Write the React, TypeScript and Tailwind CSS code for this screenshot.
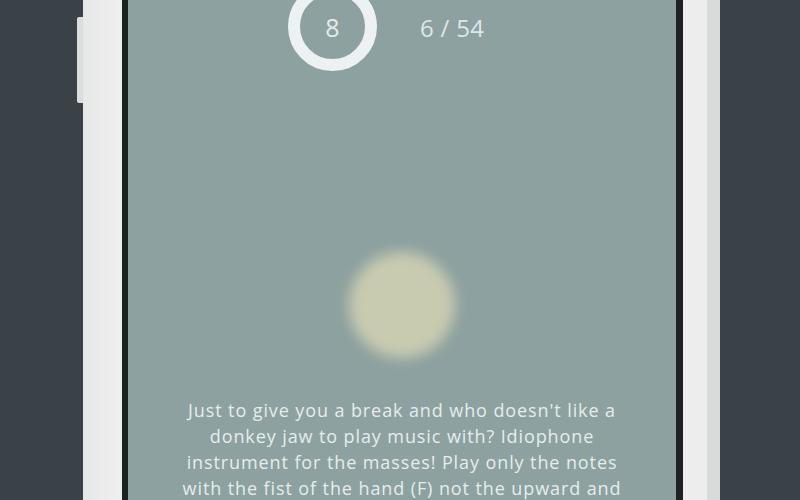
import React from 'react';

const lines = [
  "Just to give you a break and who doesn't like a",
  'donkey jaw to play music with? Idiophone',
  'instrument for the masses! Play only the notes',
  'with the fist of the hand (F) not the upward and',
];

const App = () => {
  return (
    <div className="w-[800px] h-[500px] bg-[#3a4248] overflow-hidden flex" style={{ fontFamily: '"Open Sans", sans-serif' }}>
      {/* side button */}
      <div className="w-[77px] shrink-0" />
      <div className="w-[6px] shrink-0 flex flex-col">
        <div className="h-[17px]" />
        <div className="h-[86px] bg-[#dcdede] rounded-l-[2px]" />
      </div>

      {/* phone body */}
      <div className="w-[637px] shrink-0 h-full flex bg-[#ececec]">
        <div className="w-[39px] bg-gradient-to-r from-[#e6e7e7] to-[#efefef]" />
        <div className="w-[6px] bg-[#1e2223]" />

        {/* screen */}
        <div className="w-[548px] h-full bg-[#8da1a0] flex flex-col">
          <div className="flex items-center mt-[-18px] h-[89px]">
            <div className="ml-[160px] w-[89px] h-[89px] rounded-full border-[12px] border-[#eef1f1] flex items-center justify-center">
              <span className="text-[25px] leading-none text-[#e4ecec] mt-[2px]">8</span>
            </div>
            <span className="ml-[43px] mt-[3px] text-[24px] leading-none text-[#dde7e6] tracking-[0.3px]">6 / 54</span>
          </div>

          <div className="mt-[181px] flex justify-center">
            <div className="w-[106px] h-[106px] rounded-full bg-[#c9cbb0] blur-[7px]" />
          </div>

          <div className="mt-[39px] text-center text-[18px] leading-[26px] tracking-[0.9px] text-[#e6eded]">
            {lines.map((l) => (
              <div key={l} className="whitespace-nowrap">{l}</div>
            ))}
          </div>
        </div>

        <div className="w-[7px] bg-[#1e2223]" />
        <div className="w-[24px] bg-[#ededed]" />
        <div className="w-[13px] bg-[#d9dbdb]" />
      </div>
    </div>
  );
};

export default App;
